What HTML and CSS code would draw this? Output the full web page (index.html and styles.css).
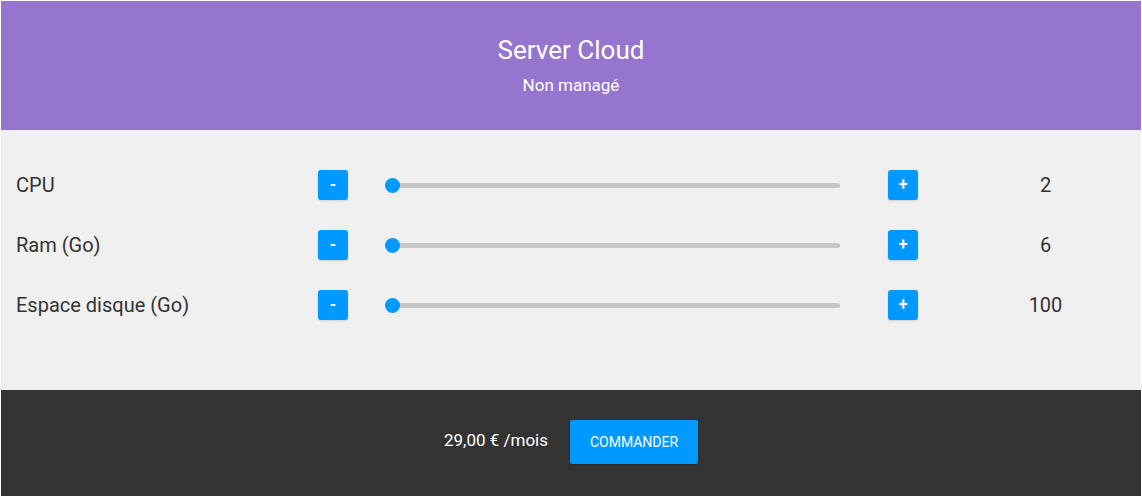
FILE: index.html
```html
<!DOCTYPE html>
<html lang="fr">
<head>
<meta charset="utf-8">
<title>Server Cloud</title>
<link rel="stylesheet" href="styles.css">
</head>
<body>
<div class="app">
  <header class="header">
    <h1 class="title">Server Cloud</h1>
    <p class="subtitle">Non managé</p>
  </header>
  <section class="config">
    <div class="row">
      <span class="label">CPU</span>
      <button class="btn-step">-</button>
      <div class="slider"><div class="track"><span class="thumb"></span></div></div>
      <button class="btn-step">+</button>
      <span class="value">2</span>
    </div>
    <div class="row">
      <span class="label">Ram (Go)</span>
      <button class="btn-step">-</button>
      <div class="slider"><div class="track"><span class="thumb"></span></div></div>
      <button class="btn-step">+</button>
      <span class="value">6</span>
    </div>
    <div class="row">
      <span class="label">Espace disque (Go)</span>
      <button class="btn-step">-</button>
      <div class="slider"><div class="track"><span class="thumb"></span></div></div>
      <button class="btn-step">+</button>
      <span class="value">100</span>
    </div>
  </section>
  <footer class="footer">
    <span class="price">29,00 € /mois</span>
    <button class="btn-order">COMMANDER</button>
  </footer>
</div>
</body>
</html>
```
FILE: styles.css
```css
html, body {
  margin: 0;
  padding: 0;
  background: #ffffff;
}
body {
  font-family: Roboto, "Liberation Sans", Arial, sans-serif;
  height: 496px;
  overflow: hidden;
}
.app {
  padding: 1px 1px 0 1px;
  display: flex;
  flex-direction: column;
  height: 495px;
}
.header {
  background: #9575cd;
  color: #ffffff;
  height: 129px;
  display: flex;
  flex-direction: column;
  align-items: center;
  box-sizing: border-box;
  padding-top: 34px;
}
.title {
  margin: 0;
  font-size: 26px;
  font-weight: 400;
  line-height: 30px;
}
.subtitle {
  margin: 10px 0 0;
  font-size: 17px;
  line-height: 20px;
}
.config {
  background: #f0f0f0;
  height: 260px;
  box-sizing: border-box;
  padding: 25px 0 0 15px;
}
.row {
  display: grid;
  grid-template-columns: 302px 30px 540px 30px 1fr;
  align-items: center;
  height: 60px;
}
.label {
  font-size: 20px;
  color: #333333;
}
.btn-step {
  width: 30px;
  height: 30px;
  padding: 0;
  border: none;
  border-radius: 3px;
  background: #0099ff;
  color: #ffffff;
  font-family: inherit;
  font-size: 16px;
  font-weight: 700;
  line-height: 30px;
  box-shadow: 0 1px 2px rgba(0,0,0,0.15);
}
.slider {
  padding: 0 48px 0 37px;
}
.track {
  position: relative;
  height: 5px;
  border-radius: 3px;
  background: #c7c7c7;
}
.thumb {
  position: absolute;
  left: 0;
  top: -5px;
  width: 15px;
  height: 15px;
  border-radius: 50%;
  background: #0099ff;
}
.value {
  padding-left: 32px;
  text-align: center;
  font-size: 20px;
  font-weight: 400;
  color: #333333;
}
.footer {
  background: #333333;
  flex: 1;
  display: flex;
  justify-content: center;
  align-items: center;
  gap: 22px;
  padding-bottom: 2px;
}
.price {
  color: #ffffff;
  font-size: 17px;
  margin-bottom: 4px;
}
.btn-order {
  width: 128px;
  height: 44px;
  border: none;
  border-radius: 2px;
  background: #0099ff;
  color: #ffffff;
  font-family: inherit;
  font-size: 14px;
  font-weight: 400;
  box-shadow: 0 1px 2px rgba(0,0,0,0.3);
}
```
